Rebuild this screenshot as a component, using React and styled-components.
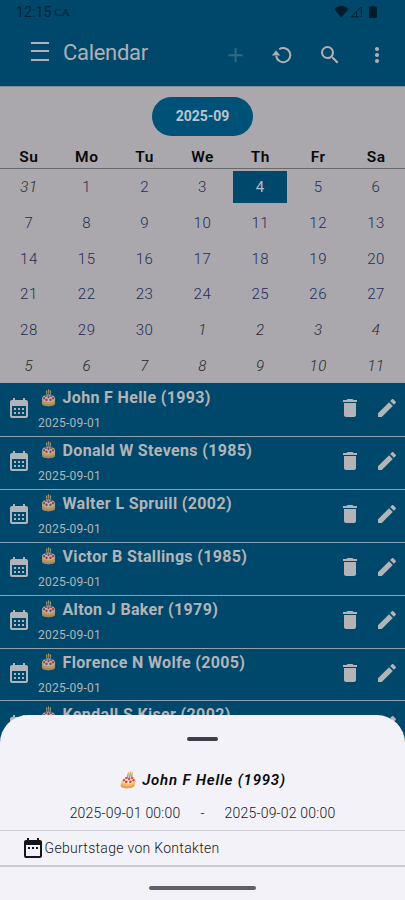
import React from "react";
import styled, { createGlobalStyle, css } from "styled-components";
import { MdSearch, MdMoreVert, MdDelete, MdEdit, MdCalendarMonth, MdDateRange } from "react-icons/md";

const Global = createGlobalStyle`
  *, *::before, *::after { box-sizing: border-box; }
  body { margin: 0; background: #00486b; font-family: Roboto, "Liberation Sans", sans-serif; }
  svg { display: block; flex: none; }
`;

const Screen = styled.div`
  position: relative;
  width: 405px;
  height: 900px;
  overflow: hidden;
  display: flex;
  flex-direction: column;
  background: #00486b;
`;

const StatusBar = styled.div`
  height: 24px;
  flex: none;
  display: flex;
  align-items: center;
  padding: 0 27px 0 16px;
  color: #002033;
`;

const Clock = styled.span`
  font-size: 14px;
  line-height: 24px;
  letter-spacing: 0.1px;
`;

const Carrier = styled.span`
  margin-left: 3px;
  font: 11px/24px "Liberation Serif", serif;
`;

const StatusIcons = styled.div`
  margin-left: auto;
`;

const AppBar = styled.header`
  height: 62px;
  flex: none;
  display: flex;
  align-items: center;
  padding: 0 16px 0 31px;
  color: #b1b0b4;
`;

const MenuButton = styled.div`
  width: 18px;
  height: 19px;
  margin-bottom: 8px;
  display: flex;
  flex-direction: column;
  justify-content: space-between;
`;

const MenuLine = styled.span`
  height: 2px;
  background: #b1b0b4;
`;

const Title = styled.h1`
  margin: 0 0 5px 14px;
  font-size: 22px;
  line-height: 30px;
  font-weight: 400;
  letter-spacing: -0.3px;
`;

const Actions = styled.div`
  margin-left: auto;
  display: flex;
  gap: 23.3px;
`;

const Calendar = styled.section`
  height: 297px;
  flex: none;
  background: #aaa8ac;
  border-top: 1px solid #7d9099;
`;

const MonthBar = styled.div`
  height: 59px;
  padding-top: 10px;
  display: flex;
  justify-content: center;
`;

const MonthPill = styled.div`
  width: 101px;
  height: 39px;
  border-radius: 20px;
  background: #005178;
  color: #bcc4cb;
  font-size: 14px;
  font-weight: 700;
  line-height: 39px;
  text-align: center;
`;

const WeekHeader = styled.div`
  display: grid;
  grid-template-columns: repeat(7, 1fr);
  height: 23px;
  border-bottom: 1px solid #69686c;
  color: #08080b;
  font-size: 15.5px;
  font-weight: 600;
  letter-spacing: 0.5px;
  line-height: 22px;
  text-align: center;
`;

const DayGrid = styled.div`
  display: grid;
  grid-template-columns: repeat(7, 1fr);
  grid-auto-rows: 35.65px;
`;

const Day = styled.div`
  display: flex;
  align-items: center;
  justify-content: center;
  margin: 2px;
  padding-top: 1px;
  color: #222c5a;
  font-size: 15px;
  font-weight: 350;
  letter-spacing: 0.6px;
  ${p => p.$outside && css`font-style: italic; color: #26262c;`}
  ${p => p.$selected && css`
    background: #00486b; color: #b9bdc3; font-weight: 400;
  `}
`;

const EventList = styled.div`
  flex: none;
  padding-top: 1px;
`;

const EventRow = styled.article`
  height: 52.92px;
  display: flex;
  align-items: flex-start;
  padding: 0 6px 0 7px;
  border-bottom: 1.5px solid #8ea2af;
  color: #b3b4b8;
  > svg { margin-top: 12px; }
`;

const EventText = styled.div`
  flex: 1;
  padding-left: 7px;
`;

const EventName = styled.div`
  display: flex;
  align-items: center;
  gap: 5.5px;
  height: 27px;
  padding-left: 1px;
  font-size: 16px;
  font-weight: 700;
  letter-spacing: 0.35px;
  white-space: nowrap;
`;

const EventDate = styled.div`
  font-size: 12px;
  line-height: 16px;
  margin-top: 4px;
  letter-spacing: 0.25px;
`;

const RowActions = styled.div`
  display: flex;
  gap: 13px;
  margin-top: 12px;
`;

const Sheet = styled.section`
  position: absolute;
  left: 0;
  right: 0;
  bottom: 0;
  height: 185px;
  border-radius: 28px 28px 0 0;
  background: #f3f2f9;
  color: #16161a;
  display: flex;
  flex-direction: column;
  align-items: center;
`;

const Handle = styled.div`
  width: 31px;
  height: 4px;
  margin-top: 22px;
  border-radius: 2px;
  background: #3e3d47;
`;

const SheetTitle = styled.h2`
  display: flex;
  align-items: center;
  gap: 5px;
  height: 24px;
  margin: 27px 0 0;
  font-size: 15px;
  font-weight: 600;
  font-style: italic;
  letter-spacing: 0.8px;
  color: #09090c;
`;

const Period = styled.div`
  display: flex;
  gap: 20px;
  margin-top: 11px;
  font-size: 14px;
  font-weight: 350;
  line-height: 20px;
  letter-spacing: 0.2px;
`;

const Source = styled.div`
  width: 100%;
  height: 37px;
  margin-top: 7px;
  padding-left: 20.5px;
  display: flex;
  align-items: center;
  border-top: 1px solid #cdccd3;
  border-bottom: 2px solid #cbcad1;
  font-size: 14px;
  font-weight: 350;
  letter-spacing: 0.3px;
`;

const NavHandle = styled.div`
  width: 107px;
  height: 4px;
  margin-top: 19px;
  border-radius: 2px;
  background: #606064;
`;

function Cake({ dim }) {
  return (
    <svg width="18" height="18" viewBox="0 0 18 18" opacity={dim ? 0.72 : 1}>
      <g transform={dim ? "translate(1.200 0) scale(.9 1)" : "translate(3 0) scale(.95 1) skewX(-13)"}>
        <path d="M2 10v4c0 4.200 14.500 4.200 14.500 0v-4z" fill="#f5b765" />
        <path d="M2 13.600c1.500 2.600 13 2.600 14.500 0v.9c0 3.700-14.500 3.700-14.500 0z" fill="#e79c4b" />
        <ellipse cx="9.250" cy="9.500" rx="7.250" ry="4" fill="#f8d6a5" />
        <ellipse cx="9.250" cy="9.200" rx="6.200" ry="3.200" fill="#fff0df" />
        <path d="M7.200 8V3.500M9.300 7.500V2.500M11.400 8V3.500" stroke="#829da9" strokeWidth="1.400" />
        <path d="M7.200 3.500V2M9.300 2.500V1M11.400 3.500V2" stroke="#e7ad56" strokeWidth="1.400" strokeLinecap="round" />
        <g fill="#dc3e35">
          <circle cx="4.300" cy="9.200" r="1.250" /><circle cx="6" cy="7" r="1.100" />
          <circle cx="12.600" cy="7" r="1.100" /><circle cx="14.200" cy="9.200" r="1.250" />
          <circle cx="7" cy="10.800" r="1.400" /><circle cx="11.400" cy="10.800" r="1.400" />
          <circle cx="9.250" cy="8" r="1.200" />
        </g>
      </g>
    </svg>
  );
}

const weekdays = ["Su", "Mo", "Tu", "We", "Th", "Fr", "Sa"];
const days = [
  { n: 31, outside: true },
  ...Array.from({ length: 30 }, (_, i) => ({ n: i + 1, outside: false })),
  ...Array.from({ length: 11 }, (_, i) => ({ n: i + 1, outside: true })),
];
const events = [
  "John F Helle (1993)",
  "Donald W Stevens (1985)",
  "Walter L Spruill (2002)",
  "Victor B Stallings (1985)",
  "Alton J Baker (1979)",
  "Florence N Wolfe (2005)",
  "Kendall S Kiser (2002)",
];

export default function App() {
  return (
    <>
      <Global />
      <Screen>
        <StatusBar>
          <Clock>12:15</Clock>
          <Carrier>CA</Carrier>
          <StatusIcons>
            <svg width="44" height="14" viewBox="0 0 44 14" fill="#001c2c">
              <path d="M0 4C4-.1 10.500-.1 14.500 4L7.300 12.500Z" />
              <path d="M17.500 11.800 26.500 2.500M17.500 11.800H25M22.500 6.500V11.800M27.300 2V9M27.300 10.500V12" fill="none" stroke="#001c2c" strokeWidth="1" />
              <path d="M37 1H41V2H42Q43 2 43 3V12Q43 13 42 13H36Q35 13 35 12V3Q35 2 36 2H37Z" />
            </svg>
          </StatusIcons>
        </StatusBar>
        <AppBar>
          <MenuButton><MenuLine /><MenuLine /><MenuLine /></MenuButton>
          <Title>Calendar</Title>
          <Actions>
            <svg width="24" height="24" viewBox="0 0 24 24">
              <path d="M5.500 12.300H19.500M12.500 5.300V19.300" stroke="#316983" strokeWidth="2" />
            </svg>
            <svg width="24" height="24" viewBox="0 0 24 24">
              <path d="M9.200 6.200A7.100 7.100 0 1 1 6.200 13" fill="none" stroke="currentColor" strokeWidth="2" />
              <path d="M1.900 12.500 6 7.500 10.300 12.500Z" fill="currentColor" />
            </svg>
            <MdSearch size={24} />
            <MdMoreVert size={24} />
          </Actions>
        </AppBar>
        <Calendar>
          <MonthBar><MonthPill>2025-09</MonthPill></MonthBar>
          <WeekHeader>{weekdays.map(d => <span key={d}>{d}</span>)}</WeekHeader>
          <DayGrid>
            {days.map((d, i) => (
              <Day key={i} $outside={d.outside} $selected={i === 4}>{d.n}</Day>
            ))}
          </DayGrid>
        </Calendar>
        <EventList>
          {events.map(name => (
            <EventRow key={name}>
              <MdCalendarMonth size={24} />
              <EventText>
                <EventName><Cake dim />{name}</EventName>
                <EventDate>2025-09-01</EventDate>
              </EventText>
              <RowActions><MdDelete size={24} /><MdEdit size={24} /></RowActions>
            </EventRow>
          ))}
        </EventList>
        <Sheet>
          <Handle />
          <SheetTitle><Cake />John F Helle (1993)</SheetTitle>
          <Period><span>2025-09-01 00:00</span><span>-</span><span>2025-09-02 00:00</span></Period>
          <Source><MdDateRange size={24} />Geburtstage von Kontakten</Source>
          <NavHandle />
        </Sheet>
      </Screen>
    </>
  );
}
